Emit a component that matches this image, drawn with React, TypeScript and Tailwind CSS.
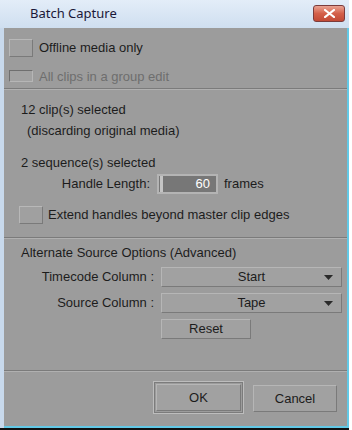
import React from "react";

const font = { fontFamily: '"Liberation Sans", Arial, sans-serif' };

const Check = ({ disabled = false }: { disabled?: boolean }) =>
  disabled ? (
    <div className="w-[24px] h-[12px] bg-[#a2a2a2] border border-t-[#6f6f6f] border-l-[#6f6f6f] border-r-[#b6b6b6] border-b-[#b6b6b6]" />
  ) : (
    <div className="w-[24px] h-[18px] bg-[#a0a0a0] border border-t-[#b8b8b8] border-l-[#b8b8b8] border-r-[#7a7a7a] border-b-[#7a7a7a]" />
  );

const Separator = () => (
  <div className="flex flex-col">
    <div className="h-px bg-[#7b7b7b]" />
    <div className="h-px bg-[#b0b0b0]" />
  </div>
);

const Dropdown = ({ value }: { value: string }) => (
  <div className="relative w-[181px] h-[20px] bg-[#a1a1a1] border border-t-[#b6b6b6] border-l-[#b6b6b6] border-r-[#7a7a7a] border-b-[#7a7a7a] flex items-center justify-center text-[13px] text-[#1c1c1c]">
    {value}
    <svg className="absolute right-[8px] top-[7px]" width="9" height="5" viewBox="0 0 9 5">
      <path d="M0 0h9L4.5 5z" fill="#2a2a2a" />
    </svg>
  </div>
);

const Button = ({ children, className = "" }: { children: React.ReactNode; className?: string }) => (
  <div
    className={`bg-[#a1a1a1] border border-t-[#b6b6b6] border-l-[#b6b6b6] border-r-[#7a7a7a] border-b-[#7a7a7a] flex items-center justify-center text-[13px] text-[#1c1c1c] ${className}`}
  >
    {children}
  </div>
);

export default function App() {
  return (
    <div className="w-[352px] h-[430px] bg-white" style={font}>
      <div className="w-[349px] h-[430px] flex flex-col border-b-2 border-[#111]">
        {/* title bar */}
        <div className="h-[28px] bg-gradient-to-b from-[#e3edf8] to-[#cfdff0] flex items-center justify-between pl-[30px] pr-[4px]">
          <span
            className="text-[13px] text-[#1a1838] -mt-[1px]"
            style={{ fontFamily: '"Noto Sans", "Open Sans", sans-serif' }}
          >
            Batch Capture
          </span>
          <div className="w-[32px] h-[17px] -mt-[2px] rounded-[3px] border border-[#7b3c3c] bg-gradient-to-b from-[#e9a393] via-[#d4604a] to-[#c24a36] flex items-center justify-center">
            <svg width="11" height="9" viewBox="0 0 11 9">
              <path d="M1 1l9 7M10 1L1 8" stroke="#fff" strokeWidth="2.2" strokeLinecap="square" />
            </svg>
          </div>
        </div>

        {/* body */}
        <div className="flex-1 flex bg-[#c8d9ec] pl-[4px]">
          <div className="flex-1 flex flex-col bg-[#9c9c9c] border-r-2 border-b-2 border-[#63c9e6] text-[13px] text-[#1c1c1c]">
            {/* section 1 */}
            <div className="h-[60px] pt-[10px] pl-[5px] flex flex-col">
              <div className="flex items-center gap-[6px]">
                <Check />
                <span>Offline media only</span>
              </div>
              <div className="flex items-center gap-[6px] mt-[9px]">
                <Check disabled />
                <span className="text-[#6e6e6e]">All clips in a group edit</span>
              </div>
            </div>
            <Separator />

            {/* section 2 */}
            <div className="h-[147px] pt-[12px] flex flex-col leading-[16px]">
              <div className="pl-[17px]">12 clip(s) selected</div>
              <div className="pl-[23px] mt-[5px]">(discarding original media)</div>
              <div className="pl-[17px] mt-[16px]">2 sequence(s) selected</div>
              <div className="flex items-center mt-[3px]">
                <div className="w-[146px] text-right">Handle Length:</div>
                <div className="ml-[7px] w-[61px] h-[20px] border-2 border-[#b4b4b4] bg-[#777777] flex">
                  <div className="w-[3px] h-full bg-[#c4c4c4] ml-[1px]" />
                  <div className="flex-1 text-right pr-[6px] text-white leading-[16px]">60</div>
                </div>
                <span className="ml-[6px]">frames</span>
              </div>
              <div className="flex items-center gap-[5px] pl-[15px] mt-[12px]">
                <Check />
                <span>Extend handles beyond master clip edges</span>
              </div>
            </div>
            <Separator />

            {/* section 3 */}
            <div className="h-[131px] pt-[6px] flex flex-col leading-[16px]">
              <div className="pl-[17px]">Alternate Source Options (Advanced)</div>
              <div className="flex items-center mt-[6px]">
                <div className="w-[150px] text-right">Timecode Column :</div>
                <div className="ml-[7px]">
                  <Dropdown value="Start" />
                </div>
              </div>
              <div className="flex items-center mt-[6px]">
                <div className="w-[150px] text-right">Source Column :</div>
                <div className="ml-[7px]">
                  <Dropdown value="Tape" />
                </div>
              </div>
              <div className="ml-[157px] mt-[6px]">
                <Button className="w-[90px] h-[20px]">Reset</Button>
              </div>
            </div>
            <Separator />

            {/* section 4 */}
            <div className="flex-1 flex justify-end items-start pt-[9px] pr-[10px] gap-[9px]">
              <div className="p-[2px] border border-[#bdbdbd] bg-[#9c9c9c] outline outline-1 outline-[#7c7c7c] -outline-offset-[2px]">
                <Button className="w-[85px] h-[27px]">OK</Button>
              </div>
              <Button className="w-[84px] h-[27px] mt-[4px]">Cancel</Button>
            </div>
          </div>
        </div>
      </div>
    </div>
  );
}
